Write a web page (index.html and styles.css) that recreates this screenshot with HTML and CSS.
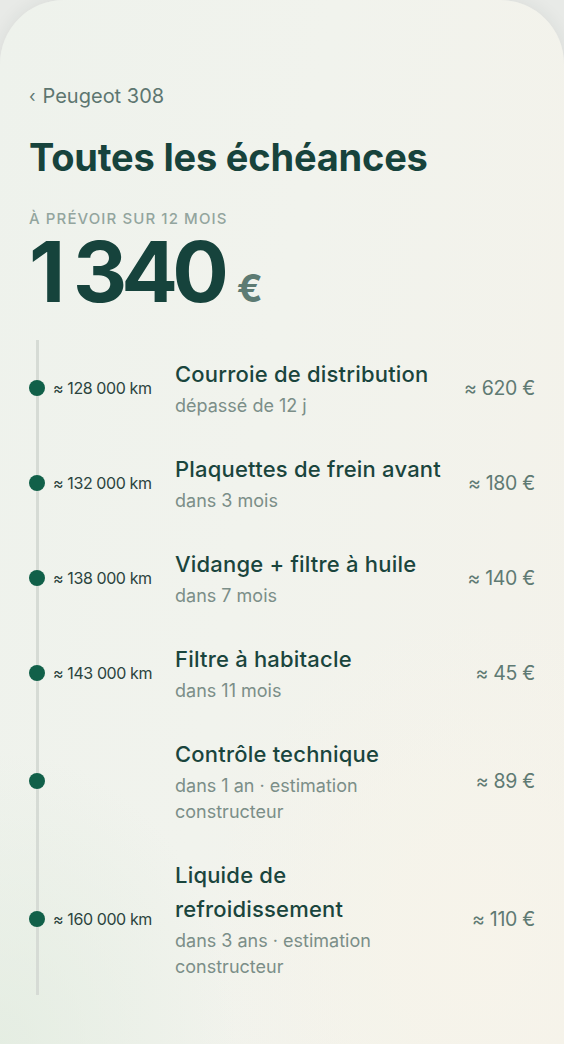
FILE: index.html
```html
<!DOCTYPE html>
<html lang="fr">
<head>
<meta charset="utf-8">
<title>Toutes les échéances</title>
<link rel="stylesheet" href="styles.css">
</head>
<body>
<main class="card">
  <a class="back" href="#"><span class="chev">‹</span>Peugeot 308</a>
  <h1 class="title">Toutes les échéances</h1>
  <div class="label">À PRÉVOIR SUR 12 MOIS</div>
  <div class="total"><span class="amount">1 340</span><span class="cur">€</span></div>

  <ol class="timeline">
    <li class="row">
      <span class="dot"></span>
      <span class="km">≈ 128 000 km</span>
      <div class="info">
        <div class="name">Courroie de distribution</div>
        <div class="sub">dépassé de 12 j</div>
      </div>
      <span class="price">≈ 620 €</span>
    </li>
    <li class="row">
      <span class="dot"></span>
      <span class="km">≈ 132 000 km</span>
      <div class="info">
        <div class="name">Plaquettes de frein avant</div>
        <div class="sub">dans 3 mois</div>
      </div>
      <span class="price">≈ 180 €</span>
    </li>
    <li class="row">
      <span class="dot"></span>
      <span class="km">≈ 138 000 km</span>
      <div class="info">
        <div class="name">Vidange + filtre à huile</div>
        <div class="sub">dans 7 mois</div>
      </div>
      <span class="price">≈ 140 €</span>
    </li>
    <li class="row">
      <span class="dot"></span>
      <span class="km">≈ 143 000 km</span>
      <div class="info">
        <div class="name">Filtre à habitacle</div>
        <div class="sub">dans 11 mois</div>
      </div>
      <span class="price">≈ 45 €</span>
    </li>
    <li class="row">
      <span class="dot"></span>
      <span class="km"></span>
      <div class="info">
        <div class="name">Contrôle technique</div>
        <div class="sub">dans 1 an · estimation constructeur</div>
      </div>
      <span class="price">≈ 89 €</span>
    </li>
    <li class="row">
      <span class="dot"></span>
      <span class="km">≈ 160 000 km</span>
      <div class="info">
        <div class="name">Liquide de refroidissement</div>
        <div class="sub">dans 3 ans · estimation constructeur</div>
      </div>
      <span class="price">≈ 110 €</span>
    </li>
  </ol>
</main>
</body>
</html>
```

FILE: styles.css
```css
* { box-sizing: border-box; }

html, body {
  margin: 0;
  padding: 0;
}

body {
  background: #e8eae7;
  font-family: Inter, "Noto Sans", "Liberation Sans", sans-serif;
  overflow: hidden;
}

.card {
  display: block;
  min-height: 1044px;
  padding: 84px 29px 0 29px;
  border-radius: 64px 64px 0 0;
  box-shadow: 0 0 18px rgba(40, 50, 45, 0.08);
  background:
    radial-gradient(ellipse 70% 45% at 85% 90%, rgba(247, 244, 234, 0.9), rgba(247, 244, 234, 0) 70%),
    radial-gradient(ellipse 60% 40% at 0% 100%, rgba(226, 236, 224, 0.8), rgba(226, 236, 224, 0) 70%),
    linear-gradient(100deg, #eef2ec 0%, #f1f3ed 45%, #f4f2ea 100%);
}

.back {
  display: flex;
  align-items: center;
  gap: 7px;
  height: 24px;
  font-size: 20px;
  line-height: 24px;
  color: #5d7670;
  text-decoration: none;
  letter-spacing: 0;
}

.chev {
  font-size: 17px;
  color: #5d7670;
}

.title {
  margin: 26px 0 0 0;
  font-size: 38px;
  line-height: 46px;
  font-weight: 700;
  color: #17433c;
  letter-spacing: -0.2px;
}

.label {
  margin-top: 30px;
  font-size: 15px;
  line-height: 18px;
  font-weight: 500;
  color: #93a59e;
  letter-spacing: 1.1px;
}

.total {
  margin-top: 9px;
  display: flex;
  align-items: baseline;
  gap: 14px;
}

.amount {
  font-size: 84px;
  line-height: 70px;
  font-weight: 700;
  color: #16433c;
  letter-spacing: -6px;
}

.cur {
  font-size: 38px;
  line-height: 40px;
  font-weight: 700;
  color: #5d7b73;
}

.timeline {
  position: relative;
  list-style: none;
  margin: 32px 0 0 0;
  padding: 17px 0 15px 0;
  display: flex;
  flex-direction: column;
  gap: 33px;
}

.timeline::before {
  content: "";
  position: absolute;
  left: 7px;
  top: 0;
  bottom: 0;
  width: 3px;
  background: #d6dbd5;
}

.row {
  display: grid;
  grid-template-columns: 16px 114px 1fr auto;
  column-gap: 8px;
  align-items: center;
}

.dot {
  width: 16px;
  height: 16px;
  border-radius: 50%;
  background: #116049;
  position: relative;
}

.km {
  font-size: 16px;
  color: #2b443e;
  letter-spacing: -0.4px;
  white-space: nowrap;
}

.info {
  max-width: 275px;
}

.name {
  font-size: 22px;
  line-height: 34px;
  font-weight: 500;
  color: #1a453d;
  letter-spacing: 0.2px;
}

.sub {
  margin-top: 2px;
  font-size: 18px;
  line-height: 26px;
  color: #7b8e88;
  letter-spacing: 0;
}

.price {
  font-size: 19.5px;
  color: #5f7a73;
  letter-spacing: -0.3px;
  text-align: right;
  white-space: nowrap;
}
```
